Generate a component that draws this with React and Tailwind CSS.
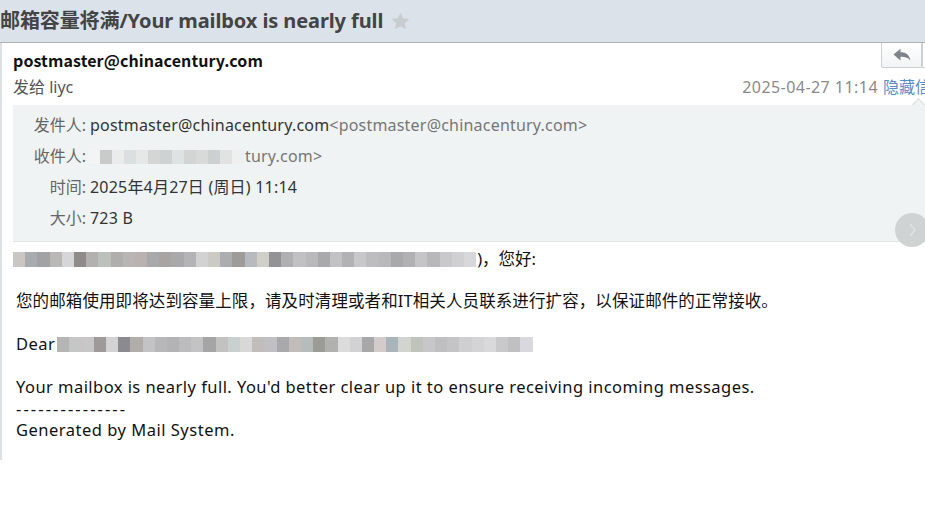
import React from "react";

const line1 = ["#c9c6c4","#a9acae","#a2a2a4","#b9b8b6","#d6d6d8","#8f8b88","#b2b1b0","#bcc1bb","#afaeac","#b7b6b5","#b8b3b1","#a9a8aa","#a7a4a2","#a9a9ab","#b4b4b6","#d2d2d2","#cbcac5","#acadaf","#9d9c9a","#b7bbbf","#cfcec9","#939396","#b0b0b2","#c1c1c3","#b9b9bb","#a9a9ab","#c2c2c4","#b2b2b4","#c8c8ca","#bdbdbf","#b9b8ba","#a9a9ab","#b1b0b2","#c5c5c7","#b8b8ba","#c9c9cb","#d0d0d2","#d8d8da"];
const line3 = ["#b5b5b5","#c5c7c6","#c7c7c7","#9e9a99","#d3d3d3","#8b8b8f","#b1aeaa","#c3c3c5","#b7b7b9","#b3b3b5","#bcbcbe","#c3c3c5","#a5a5a5","#c2c2c0","#cad0d0","#d8d8d8","#c0bdbb","#c0c0c4","#a9a9ab","#c2bdba","#b6bbbb","#9c9c97","#b1b1af","#dcdcdc","#d2d2d4","#a8a8aa","#d4ccca","#a9b5bb","#d2d4d0","#c0c2bc","#c7c7c9","#bfbfc1","#c4c4c6","#cfcfd1","#d4d4d6","#d9d9db","#c9c9cb","#c0c0c2","#d8d8de"];

const SANS = '"Noto Sans", "Noto Sans CJK SC", sans-serif';
const CJK = '"Noto Sans CJK SC", sans-serif';

function Mosaic({ colors }) {
  return (
    <span className="inline-flex h-[15px]">
      {colors.map((c, i) => (
        <span key={i} className="w-[12.2px] h-full" style={{ background: c }} />
      ))}
    </span>
  );
}

export default function App() {
  return (
    <div className="w-[925px] h-[512px] bg-white overflow-hidden text-[#333]" style={{ fontFamily: SANS }}>
      {/* title bar */}
      <div className="h-[43px] bg-[#dbe2e9] border-b border-[#aeb3b7] flex items-center">
        <h1 className="text-[20px] font-bold text-[#444] leading-none flex items-center tracking-[-0.1px]">
          邮箱容量将满/Your mailbox is nearly full
          <svg className="ml-[8px]" width="19" height="18" viewBox="0 0 24 23">
            <path d="M12 0.8l3.4 7.1 7.8 1-5.7 5.4 1.4 7.7L12 18.3l-6.9 3.7 1.4-7.7L0.8 8.9l7.8-1z" fill="#c9cdd0" />
          </svg>
        </h1>
      </div>

      <div className="flex">
        <div className="w-[2px] h-[417px] bg-[#dde1e4] shrink-0" />
        <div className="flex-1 min-w-0">
          {/* header */}
          <div className="relative pl-[11px] pt-[6px]">
            <div className="text-[16px] font-bold text-[#111] leading-[22px] tracking-[0.1px]" style={{ fontFamily: CJK }}>postmaster@chinacentury.com</div>
            <div className="flex items-center justify-between h-[34px] pb-[3px]">
              <span className="text-[16px] text-[#555]">发给 liyc</span>
              <span className="text-[16px] whitespace-nowrap mr-[-6px]">
                <span className="text-[#8a8a8a] tracking-[0.45px]">2025-04-27 11:14</span>
                <span className="text-[#5a8cc8] ml-[5px]">隐藏信</span>
              </span>
            </div>
            {/* reply button */}
            <div className="absolute right-[0px] top-0 flex">
              <div className="w-[41px] h-[25px] border border-t-0 border-[#cdd0d3] bg-gradient-to-b from-white to-[#f2f3f4] rounded-b-[2px] flex items-center justify-center">
                <svg width="18" height="14" viewBox="0 0 18 14">
                  <path d="M0.5 6.5L7.5 0.8v3.5c5.5 0 9 2.5 10 8.5-2-3-5-4-10-4v3.6z" fill="#7d8389" />
                </svg>
              </div>
              <div className="w-[3px] h-[25px] border-l border-b border-[#cdd0d3] bg-white" />
            </div>
          </div>

          {/* info box */}
          <div className="relative ml-[11px] bg-[#eff3f3] border-b border-[#e1e5e5] h-[137px] pt-[9px] text-[16px]">
            <div className="absolute right-[2px] top-[-5px] w-[9px] h-[9px] rotate-45 bg-[#eff3f3] border-l border-t border-[#d5dada]" />
            <div className="flex flex-col gap-[9px] leading-[22px] tracking-[0.2px]">
              <div className="flex whitespace-nowrap">
                <span className="w-[73px] text-right text-[#666] tracking-normal">发件人:</span>
                <span className="text-[#333] ml-[4px]">postmaster@chinacentury.com</span>
                <span className="text-[#777]">&lt;postmaster@chinacentury.com&gt;</span>
              </div>
              <div className="flex items-center">
                <span className="w-[73px] text-right text-[#666] tracking-normal">收件人:</span>
                <span className="inline-flex h-[14px] ml-[2px] mt-[2px]">
                  {["#f3f5f5","#c9cbcb","#eaecec","#dcdfdf","#e6e8e8","#d4d6d6","#cfd2d2","#dfe2e2","#d3d5d5","#d8dada","#cdd0d0","#e1e3e3","#eef0f0"].map((c, i) => (
                    <span key={i} className="w-[12px] h-full" style={{ background: c }} />
                  ))}
                </span>
                <span className="text-[#777] ml-[1px]">tury.com&gt;</span>
              </div>
              <div className="flex">
                <span className="w-[73px] text-right text-[#666] tracking-normal">时间:</span>
                <span className="text-[#333] ml-[4px]">2025年4月27日 (周日) 11:14</span>
              </div>
              <div className="flex">
                <span className="w-[73px] text-right text-[#666] tracking-normal">大小:</span>
                <span className="text-[#333] ml-[4px]">723 B</span>
              </div>
            </div>
            <div className="absolute right-[-4px] bottom-[-6px] w-[34px] h-[34px] rounded-full bg-[#cfd3d3] flex items-center pl-[14px]">
              <svg width="7" height="14" viewBox="0 0 7 14">
                <path d="M1 1l5 6-5 6" fill="none" stroke="#eef0f0" strokeWidth="1" />
              </svg>
            </div>
          </div>

          {/* body */}
          <div className="pl-[14px] pt-[6px] text-[16.5px] text-[#111] leading-[21.5px]">
            <p className="h-[42px] flex items-start">
              <span className="mt-[4px] -ml-[3px] flex"><Mosaic colors={line1} /></span>
              <span className="ml-[1px]">)，您好:</span>
            </p>
            <p className="h-[43px] whitespace-nowrap tracking-[0.1px]">您的邮箱使用即将达到容量上限，请及时清理或者和IT相关人员联系进行扩容，以保证邮件的正常接收。</p>
            <p className="h-[43px] flex items-start tracking-[0.45px]">
              <span>Dear</span>
              <span className="mt-[4px] ml-[2px] flex"><Mosaic colors={line3} /></span>
            </p>
            <p className="whitespace-nowrap tracking-[0.45px]">Your mailbox is nearly full. You'd better clear up it to ensure receiving incoming messages.</p>
            <p className="tracking-[2.1px]">---------------</p>
            <p className="tracking-[0.5px]">Generated by Mail System.</p>
          </div>
        </div>
      </div>
    </div>
  );
}
